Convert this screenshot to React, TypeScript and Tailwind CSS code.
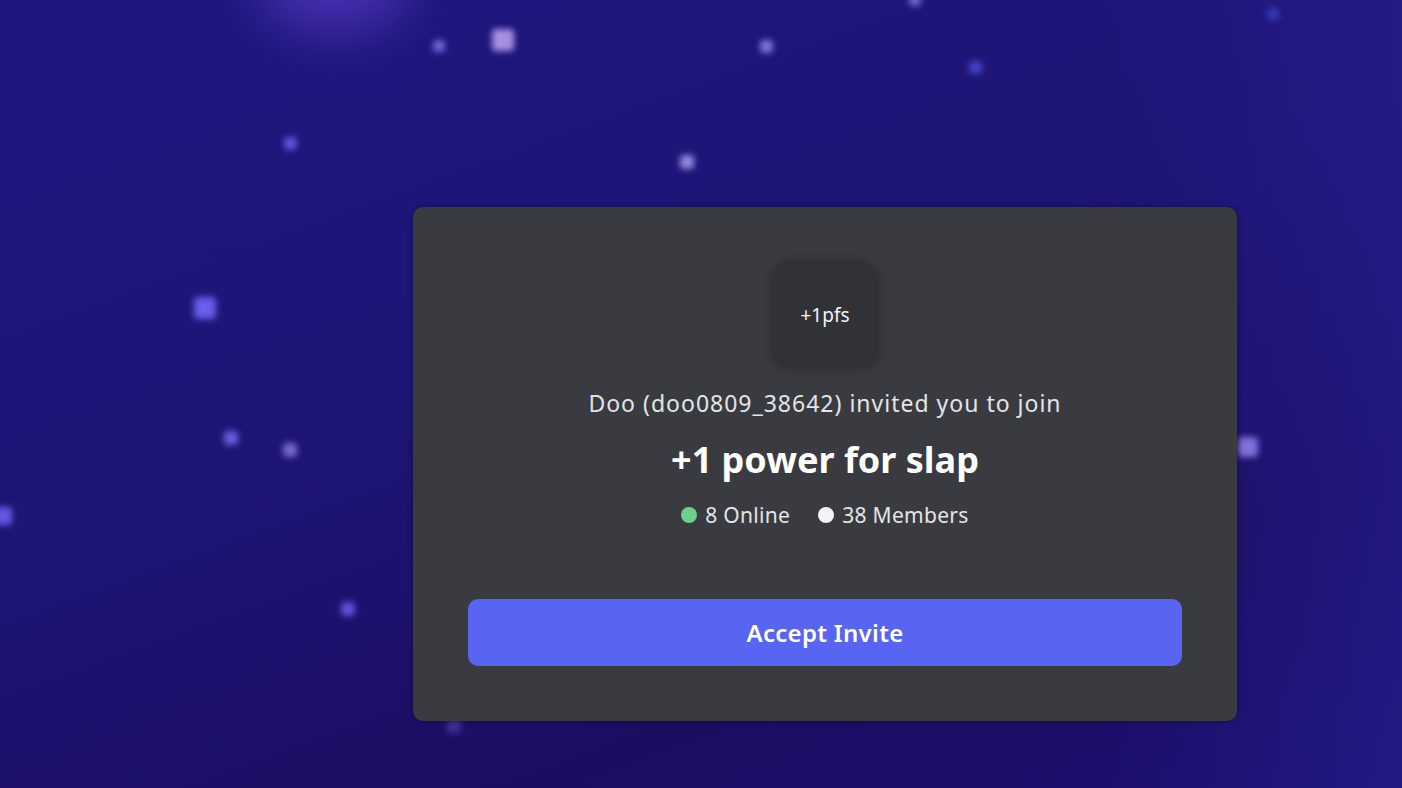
import React from "react";

const stars = [
  { x: 503, y: 40, s: 22, c: "#b89cf0", o: 0.9 },
  { x: 439, y: 46, s: 12, c: "#8a7af0", o: 0.8 },
  { x: 766, y: 46, s: 13, c: "#9a8cf0", o: 0.8 },
  { x: 975, y: 67, s: 13, c: "#4f4fd8", o: 0.8 },
  { x: 915, y: 0, s: 12, c: "#9a8cf0", o: 0.7 },
  { x: 1273, y: 14, s: 12, c: "#3d3fc8", o: 0.8 },
  { x: 290, y: 143, s: 13, c: "#6d60e8", o: 0.85 },
  { x: 687, y: 162, s: 14, c: "#a99ef0", o: 0.85 },
  { x: 205, y: 308, s: 22, c: "#6c62f0", o: 0.95 },
  { x: 231, y: 438, s: 14, c: "#7a6af0", o: 0.85 },
  { x: 290, y: 450, s: 14, c: "#8a78e0", o: 0.85 },
  { x: 3, y: 516, s: 18, c: "#6c60f0", o: 0.9 },
  { x: 348, y: 609, s: 14, c: "#6a5ef0", o: 0.85 },
  { x: 454, y: 726, s: 14, c: "#4a3fb0", o: 0.7 },
  { x: 1248, y: 447, s: 20, c: "#8b7ce8", o: 0.9 },
];

export default function App() {
  return (
    <div className="relative w-[1402px] h-[788px] overflow-hidden bg-[linear-gradient(160deg,#1e1780_0%,#1d1574_45%,#1b0d62_75%,#1c1070_100%)] font-['Noto_Sans',sans-serif]">
      {/* background glow + sparkles */}
      <div className="absolute left-[260px] -top-[80px] w-[150px] h-[110px] rounded-full bg-[#5a3cc8] opacity-70 blur-[28px]" />
      <div className="absolute right-0 top-0 w-[300px] h-[788px] bg-[linear-gradient(90deg,transparent,#26208f)] opacity-60" />
      {stars.map((st, i) => (
        <div
          key={i}
          className="absolute rounded-[4px] blur-[3px]"
          style={{
            left: st.x - st.s / 2,
            top: st.y - st.s / 2,
            width: st.s,
            height: st.s,
            background: st.c,
            opacity: st.o,
          }}
        />
      ))}

      <div className="relative pl-[413px] pt-[207px]">
        <div className="w-[824px] h-[514px] rounded-[10px] bg-[#3a3b40] shadow-[0_0_6px_rgba(0,0,0,0.35)] px-[55px] pt-[55px] flex flex-col items-center">
          <div className="w-[106px] h-[106px] rounded-[18px] bg-[#313237] shadow-[0_0_8px_rgba(30,31,35,0.6)] flex items-center justify-center text-[19px] text-[#f2f3f5]">
            +1pfs
          </div>
          <div className="mt-[20px] text-[23px] tracking-[1px] leading-[30px] text-[#e3e5e8]">
            Doo (doo0809_38642) invited you to join
          </div>
          <div className="mt-[20px] text-[36px] leading-[44px] font-bold text-white">
            +1 power for slap
          </div>
          <div className="mt-[19px] flex items-center text-[21px] tracking-[0.3px] leading-[28px] text-[#e3e5e8]">
            <span className="w-[16px] h-[16px] rounded-full bg-[#6fcf8e] mr-[8px]" />
            <span>8 Online</span>
            <span className="w-[16px] h-[16px] rounded-full bg-[#f2f3f5] ml-[28px] mr-[8px]" />
            <span>38 Members</span>
          </div>
          <button className="mt-[70px] w-full h-[67px] rounded-[10px] bg-[#5865f2] text-white text-[24px] tracking-[0.3px] font-semibold">
            Accept Invite
          </button>
        </div>
      </div>
    </div>
  );
}
